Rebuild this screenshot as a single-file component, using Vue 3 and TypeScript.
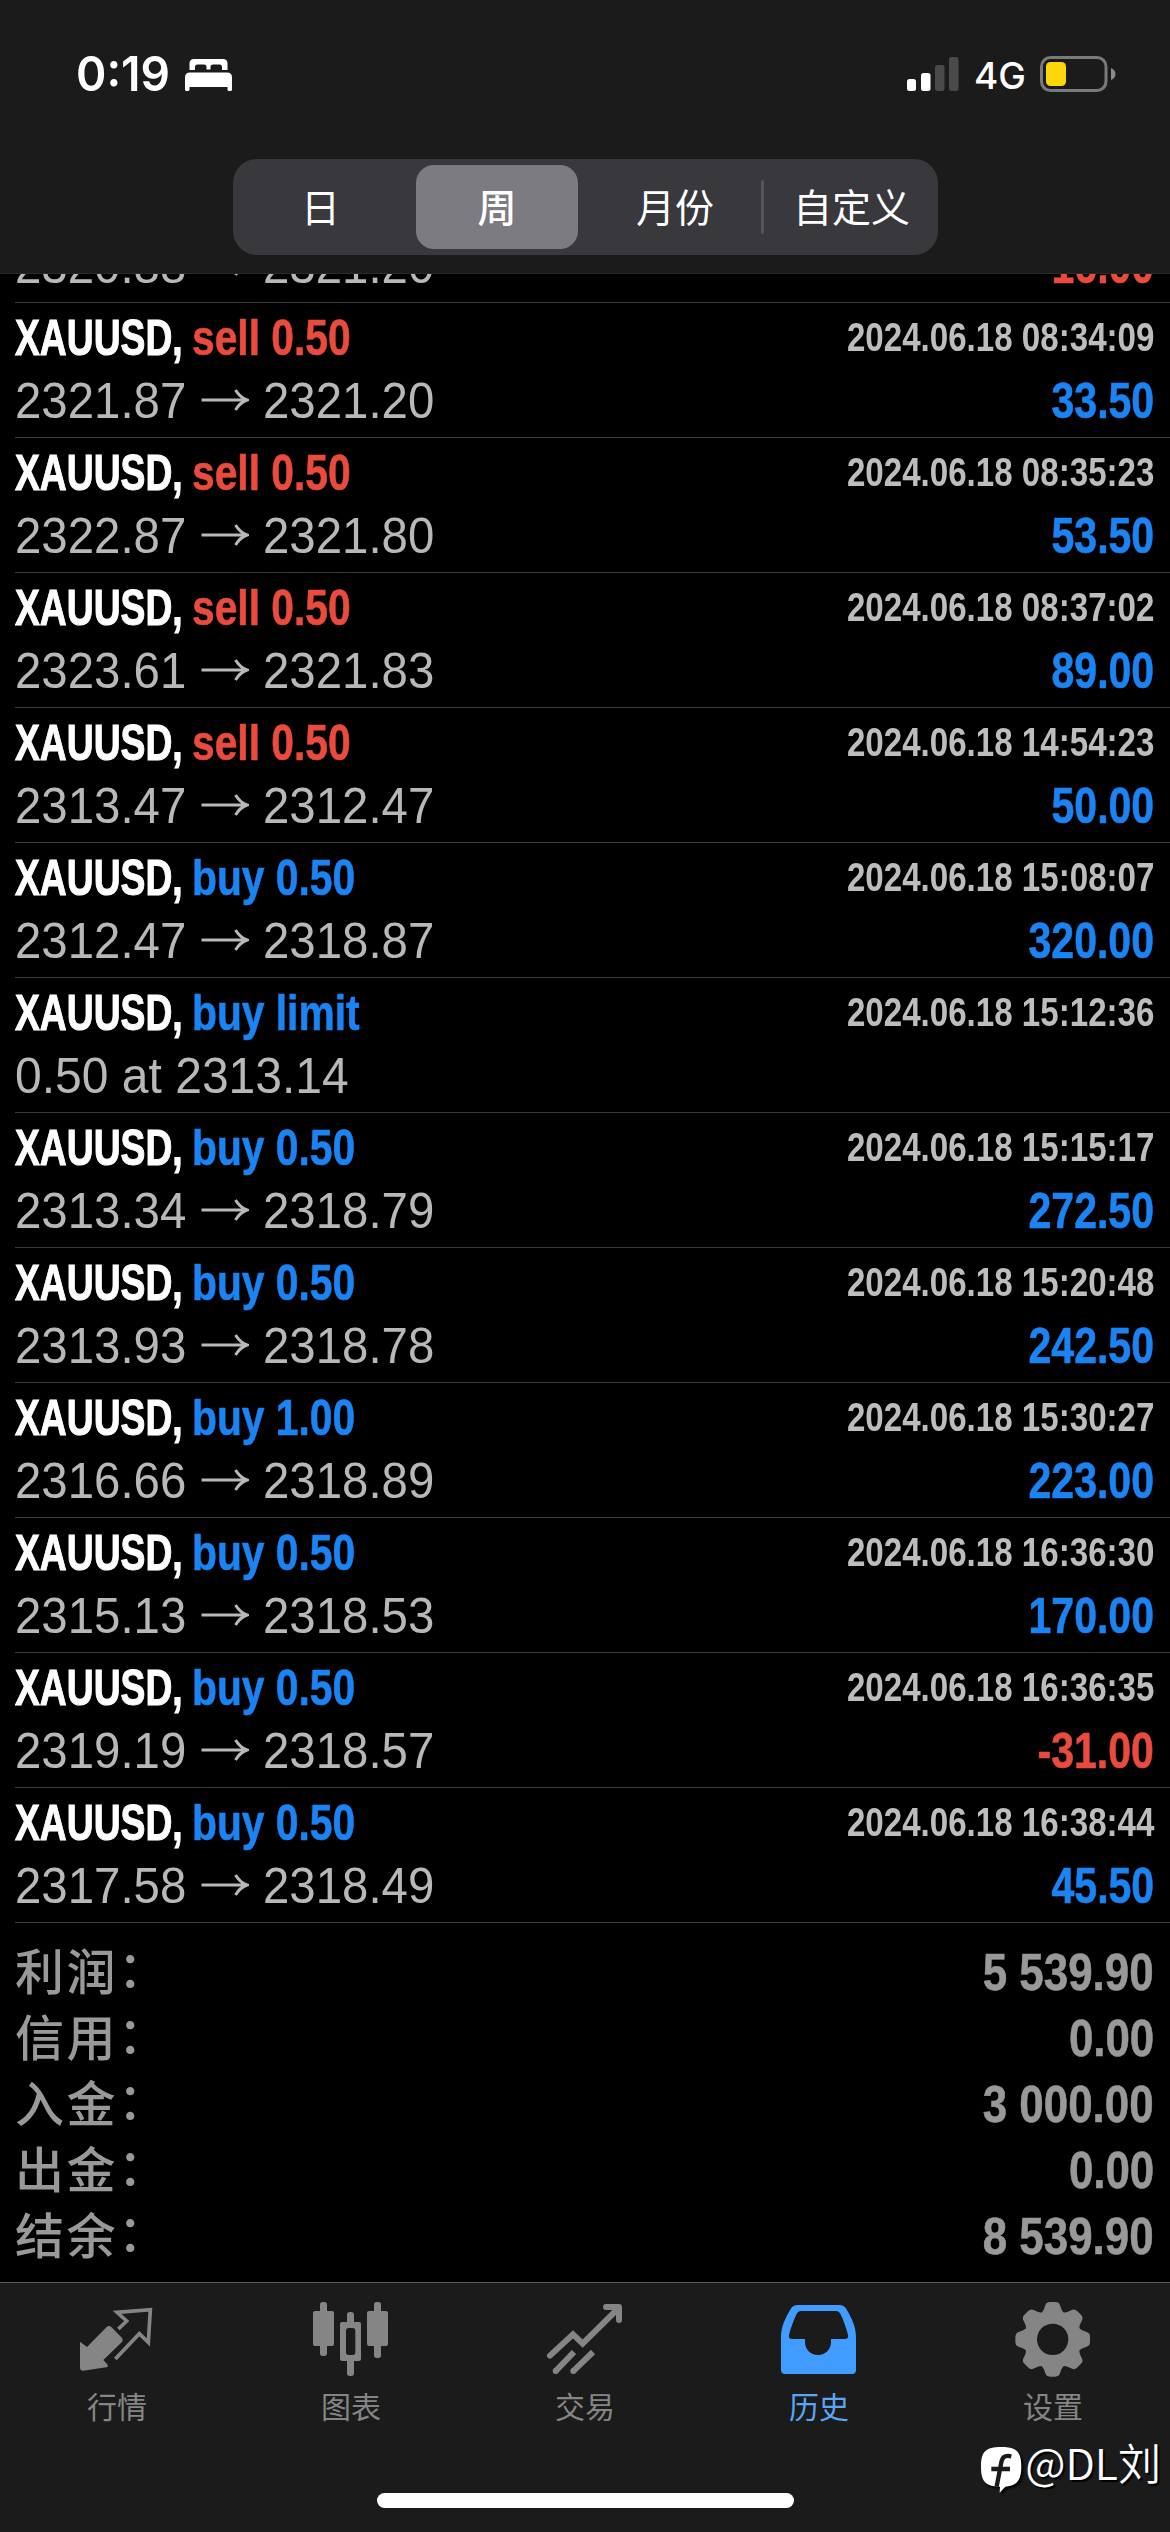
<script setup lang="ts">
interface Deal {
  kind: 'buy' | 'sell'
  label: string
  time: string
  open: string
  close?: string
  profit?: string
}

const scrolled = { open: '2320.88', close: '2321.20', profit: '16.00' }

const deals: Deal[] = [
  { kind: 'sell', label: 'sell 0.50', time: '2024.06.18 08:34:09', open: '2321.87', close: '2321.20', profit: '33.50' },
  { kind: 'sell', label: 'sell 0.50', time: '2024.06.18 08:35:23', open: '2322.87', close: '2321.80', profit: '53.50' },
  { kind: 'sell', label: 'sell 0.50', time: '2024.06.18 08:37:02', open: '2323.61', close: '2321.83', profit: '89.00' },
  { kind: 'sell', label: 'sell 0.50', time: '2024.06.18 14:54:23', open: '2313.47', close: '2312.47', profit: '50.00' },
  { kind: 'buy', label: 'buy 0.50', time: '2024.06.18 15:08:07', open: '2312.47', close: '2318.87', profit: '320.00' },
  { kind: 'buy', label: 'buy limit', time: '2024.06.18 15:12:36', open: '0.50 at 2313.14' },
  { kind: 'buy', label: 'buy 0.50', time: '2024.06.18 15:15:17', open: '2313.34', close: '2318.79', profit: '272.50' },
  { kind: 'buy', label: 'buy 0.50', time: '2024.06.18 15:20:48', open: '2313.93', close: '2318.78', profit: '242.50' },
  { kind: 'buy', label: 'buy 1.00', time: '2024.06.18 15:30:27', open: '2316.66', close: '2318.89', profit: '223.00' },
  { kind: 'buy', label: 'buy 0.50', time: '2024.06.18 16:36:30', open: '2315.13', close: '2318.53', profit: '170.00' },
  { kind: 'buy', label: 'buy 0.50', time: '2024.06.18 16:36:35', open: '2319.19', close: '2318.57', profit: '-31.00' },
  { kind: 'buy', label: 'buy 0.50', time: '2024.06.18 16:38:44', open: '2317.58', close: '2318.49', profit: '45.50' },
]

const totals: [string, string][] = [
  ['利润', '5 539.90'],
  ['信用', '0.00'],
  ['入金', '3 000.00'],
  ['出金', '0.00'],
  ['结余', '8 539.90'],
]

const periods = ['日', '周', '月份', '自定义']
const activePeriod = 1
const isLoss = (d: Deal) => (d.profit ?? '').startsWith('-')
</script>

<template>
  <div class="screen">
    <header class="top">
      <div class="status">
        <span class="clock">0:19</span>
        <svg class="bed" viewBox="0 0 47 32" width="47" height="32" fill="#fff">
          <path d="M4.500 11V4.500Q4.500 0 9 0H38Q42.500 0 42.500 4.500V11H37V8Q37 5.500 34.500 5.500H28Q25.500 5.500 25.500 8V10.500H21.500V8Q21.500 5.500 19 5.500H12.500Q10 5.500 10 8V11Z" />
          <path d="M0 18.500Q0 13.500 5 13.500H42Q47 13.500 47 18.500V30.500Q47 32 45.500 32H44Q42.500 32 42.500 30.500V28H4.500V30.500Q4.500 32 3 32H1.500Q0 32 0 30.500Z" />
        </svg>
        <span class="spacer"></span>
        <svg class="signal" viewBox="0 0 52 34" width="52" height="34">
          <rect x="0" y="22" width="9" height="12" rx="2.500" fill="#fff" />
          <rect x="14" y="16" width="9.500" height="18" rx="2.500" fill="#fff" />
          <rect x="28" y="8" width="9.500" height="26" rx="2.500" fill="#4a4a4a" />
          <rect x="42" y="0" width="9.500" height="34" rx="2.500" fill="#4a4a4a" />
        </svg>
        <span class="net">4G</span>
        <svg class="battery" viewBox="0 0 76 36" width="76" height="36">
          <rect x="1.500" y="1.500" width="64.500" height="33" rx="9" fill="none" stroke="#7a7a7a" stroke-width="3" />
          <rect x="6" y="6" width="20" height="24" rx="4.500" fill="#ffd60a" />
          <path d="M71 12Q75.500 14 75.500 18T71 24Z" fill="#8a8a8a" />
        </svg>
      </div>
      <div class="segments">
        <div v-for="(p, i) in periods" :key="p" class="segment" :class="{ active: i === activePeriod, month: i === 2, ruled: i === 3 }">
          <span>{{ p }}</span>
        </div>
      </div>
    </header>

    <main class="history">
      <div class="deal partial">
        <div class="line body">
          <span class="price">{{ scrolled.open }}</span>
          <svg class="arrow" viewBox="0 0 48 24" width="48" height="24" fill="none" stroke="#b8b8b8" stroke-width="3">
            <path d="M0.500 12H45M34.500 2Q39 9.500 46 12Q39 14.500 34.500 22" />
          </svg>
          <span class="price">{{ scrolled.close }}</span>
          <span class="profit loss">{{ scrolled.profit }}</span>
        </div>
      </div>
      <article v-for="d in deals" :key="d.time" class="deal">
        <div class="line head">
          <span class="symbol"><b>XAUUSD,</b></span>
          <span class="side" :class="d.kind">{{ d.label }}</span>
          <span class="time">{{ d.time }}</span>
        </div>
        <div class="line body">
          <span class="price" :class="{ pending: !d.close }">{{ d.open }}</span>
          <template v-if="d.close">
            <svg class="arrow" viewBox="0 0 48 24" width="48" height="24" fill="none" stroke="#b8b8b8" stroke-width="3">
              <path d="M0.500 12H45M34.500 2Q39 9.500 46 12Q39 14.500 34.500 22" />
            </svg>
            <span class="price">{{ d.close }}</span>
          </template>
          <span v-if="d.profit" class="profit" :class="{ loss: isLoss(d) }">{{ d.profit }}</span>
        </div>
      </article>
      <div class="totals">
        <div v-for="t in totals" :key="t[0]" class="total">
          <span class="name">{{ t[0] }}<i>：</i></span>
          <span class="sum">{{ t[1] }}</span>
        </div>
      </div>
    </main>

    <nav class="tabs">
      <div class="tab">
        <svg viewBox="225 78 252 252" width="84" height="84">
          <path d="M355 177L380 153L351 127L451 119L445 217L418 191L346 267" fill="none" stroke="#858585" stroke-width="11" />
          <path d="M240 215L261 231L320 171Q327 165 334 171L366 204Q371 210 366 216L310 270L323 284V291L250 302Q240 303 240 292Z" fill="#858585" />
        </svg>
        <span>行情</span>
      </div>
      <div class="tab">
        <svg viewBox="927 78 252 252" width="84" height="84" fill="#858585">
          <rect x="960" y="96" width="21" height="162" rx="8" />
          <rect x="939" y="123" width="63" height="105" rx="6" />
          <rect x="1122" y="96" width="21" height="168" rx="8" />
          <rect x="1101" y="123" width="63" height="105" rx="6" />
          <rect x="1041" y="126" width="21" height="40" rx="8" />
          <rect x="1041" y="262" width="21" height="56" rx="8" />
          <path fill-rule="evenodd" d="M1026 156H1077Q1083 156 1083 162V267Q1083 273 1077 273H1026Q1020 273 1020 267V162Q1020 156 1026 156ZM1046 174Q1038 174 1038 182V247Q1038 255 1046 255H1058Q1066 255 1066 247V182Q1066 174 1058 174Z" />
        </svg>
        <span>图表</span>
      </div>
      <div class="tab">
        <svg viewBox="369 78 252 252" width="84" height="84" fill="none" stroke="#858585" stroke-width="18">
          <path d="M390 257L459 193L488 221L596 114" stroke-linecap="round" />
          <path d="M558 111H597V150" stroke-linecap="round" stroke-linejoin="round" />
          <path d="M462 246L406 304M519 246L459 304" />
          <g fill="#858585" stroke="none"><circle cx="407" cy="303" r="9" /><circle cx="460" cy="303" r="9" /></g>
        </svg>
        <span>交易</span>
      </div>
      <div class="tab current">
        <svg viewBox="1071 78 252 252" width="84" height="84">
          <path fill="#409cff" fill-rule="evenodd" d="M1133 105H1258Q1272 105 1279 117C1296 146 1308 170 1308 202V300Q1308 312 1296 312H1095Q1083 312 1083 300V202C1083 170 1095 146 1112 117Q1119 105 1133 105ZM1142 123Q1134 123 1130 131C1121 151 1112 173 1107 194Q1105 207 1116 207H1155V217C1155 238 1171 255 1194 255S1233 238 1233 217V207H1274Q1287 207 1284 194C1278 172 1271 151 1261 131Q1257 123 1249 123Z" />
        </svg>
        <span>历史</span>
      </div>
      <div class="tab">
        <svg viewBox="483 78 252 252" width="84" height="84">
          <g fill="#858585">
            <g v-for="a in 8" :key="a" :transform="`rotate(${a * 45} 608 208)`">
              <path d="M572 132Q583 121 586 106Q589 96 600 96H616Q627 96 630 106Q633 121 644 132Z" />
            </g>
            <circle cx="608" cy="208" r="86" />
          </g>
          <circle cx="608" cy="208" r="47" fill="#1b1b1b" />
        </svg>
        <span>设置</span>
      </div>
      <div class="home-bar"></div>
      <div class="watermark">
        <svg viewBox="393 528 124 144" width="41.300" height="48">
          <path d="M453 531C500 531 514 545 514 590C514 632 500 647 466 650L449 668L450 650C405 649 393 633 393 590C393 545 407 531 453 531Z" fill="#fff" />
          <path d="M484 559C462 554 456 563 453 582L440 650M424 597H480" fill="none" stroke="#1b1b1b" stroke-width="13" />
        </svg>
        <span>@DL刘</span>
      </div>
    </nav>
  </div>
</template>

<style>
body {
  margin: 0;
  background: #000;
}
</style>

<style scoped>
.screen {
  width: 1170px;
  height: 2532px;
  display: flex;
  flex-direction: column;
  overflow: hidden;
  background: #000;
  color: #fff;
  font-family: "Liberation Sans", "Noto Sans CJK SC", sans-serif;
  white-space: nowrap;
}
.top {
  height: 274px;
  flex: none;
  box-sizing: border-box;
  background: #1b1b1b;
  border-bottom: 1px solid #2a2a2a;
}
.status {
  display: flex;
  height: 159px;
  box-sizing: border-box;
  padding: 56px 54px 0 76px;
  align-items: flex-start;
}
.clock {
  font: 600 48px/36px Inter, sans-serif;
  width: 109px;
  transform: scaleX(0.96);
  transform-origin: left;
}
.bed { margin-top: 3px; }
.spacer { flex: 1; }
.signal { margin-top: 1px; }
.net {
  font: 500 37px/40px Inter, sans-serif;
  width: 52px;
  margin: 0 14px 0 15px;
}
.segments {
  display: grid;
  grid-template-columns: 183px 162px 183px 177px;
  width: 705px;
  height: 96px;
  box-sizing: border-box;
  margin-left: 233px;
  padding: 6px 0;
  border-radius: 24px;
  background: #39383c;
}
.segment {
  position: relative;
  box-sizing: border-box;
  height: 84px;
  padding: 0 8px 5px 0;
  display: flex;
  align-items: center;
  justify-content: center;
  font: 400 39px/58px "Noto Sans CJK SC", sans-serif;
}
.segment.active {
  padding: 0 0 5px;
  border-radius: 18px;
  background: #7d7b82;
  font-weight: 500;
}
.segment.month { padding: 0 0 5px 11px; }
.segment.ruled { padding: 0 0 5px 4px; }
.segment.ruled::before {
  content: "";
  position: absolute;
  left: 0;
  top: 15px;
  width: 3px;
  height: 54px;
  border-radius: 2px;
  background: #55545a;
}
.history {
  height: 2008px;
  flex: none;
  display: flex;
  flex-direction: column;
  overflow: hidden;
}
.deal {
  height: 135px;
  flex: none;
  box-sizing: border-box;
  margin-left: 15px;
  padding: 10px 16px 0 0;
  border-bottom: 1px solid #3a3a3a;
}
.deal.partial {
  height: 29px;
  padding-top: 0;
  padding-bottom: 1px;
  display: flex;
  flex-direction: column;
  justify-content: flex-end;
  overflow: hidden;
}
.line {
  display: flex;
  align-items: center;
  flex: none;
}
.head {
  height: 50px;
  margin-bottom: 1px;
}
.body { height: 72px; }
.symbol {
  width: 177px;
  font-size: 50px;
  line-height: 50px;
  -webkit-text-stroke: 1px;
}
.symbol b {
  display: inline-block;
  transform: scaleX(0.745);
  transform-origin: left;
}
.side {
  font: bold 50px/50px "Liberation Sans", sans-serif;
  transform: scaleX(0.815);
  transform-origin: left;
  -webkit-text-stroke: 0.600px;
}
.buy { color: #1a84f5; }
.sell { color: #ea4b3c; }
.time {
  margin-left: auto;
  font-size: 40px;
  font-weight: bold;
  line-height: 48px;
  padding-bottom: 2px;
  color: #bdbdbd;
  transform: scaleX(0.828);
  transform-origin: right;
}
.price {
  width: 174px;
  font-size: 49.500px;
  line-height: 58px;
  padding-top: 2px;
  color: #b8b8b8;
  transform: scaleX(0.957);
  transform-origin: left;
}
.price.pending { transform: scaleX(0.97); }
.arrow { margin: 0 14px 0 12px; }
.profit {
  margin-left: auto;
  font-size: 50px;
  font-weight: bold;
  line-height: 58px;
  padding-top: 1px;
  color: #1a84f5;
  transform: scaleX(0.82);
  transform-origin: right;
  -webkit-text-stroke: 0.600px;
}
.profit.loss { color: #ea4b3c; }
.totals {
  height: 359px;
  flex: none;
  box-sizing: border-box;
  padding: 16px 16px 0 15px;
}
.total {
  display: flex;
  justify-content: space-between;
  height: 66px;
  line-height: 68px;
  color: #999;
}
.name {
  font: 500 49px/60px "Noto Sans CJK SC", sans-serif;
  letter-spacing: 2.500px;
}
.name i {
  font-style: normal;
  position: relative;
  top: -3px;
}
.sum {
  font-size: 51px;
  font-weight: bold;
  transform: scaleX(0.86);
  transform-origin: right;
  -webkit-text-stroke: 0.600px;
}
.tabs {
  position: relative;
  height: 250px;
  box-sizing: border-box;
  border-top: 1px solid #5a5a5a;
  background: #1b1b1b;
  display: flex;
}
.tab {
  flex: 1;
  display: flex;
  flex-direction: column;
  align-items: center;
  padding-top: 13px;
  color: #858585;
  font: 400 30px/50px "Noto Sans CJK SC", sans-serif;
}
.current { color: #5aa5f5; }
.home-bar {
  position: absolute;
  left: 377px;
  top: 210px;
  width: 417px;
  height: 15px;
  border-radius: 8px;
  background: #fff;
}
.watermark {
  position: absolute;
  left: 981px;
  top: 163px;
  display: flex;
  align-items: flex-start;
  font: 350 43px/60px "Noto Sans CJK SC", sans-serif;
  text-shadow: 2px 2px 1px #000;
}
.watermark svg { filter: drop-shadow(2px 2px 1px #000); }
.watermark span { margin: -15px 0 0 3px; }
</style>
